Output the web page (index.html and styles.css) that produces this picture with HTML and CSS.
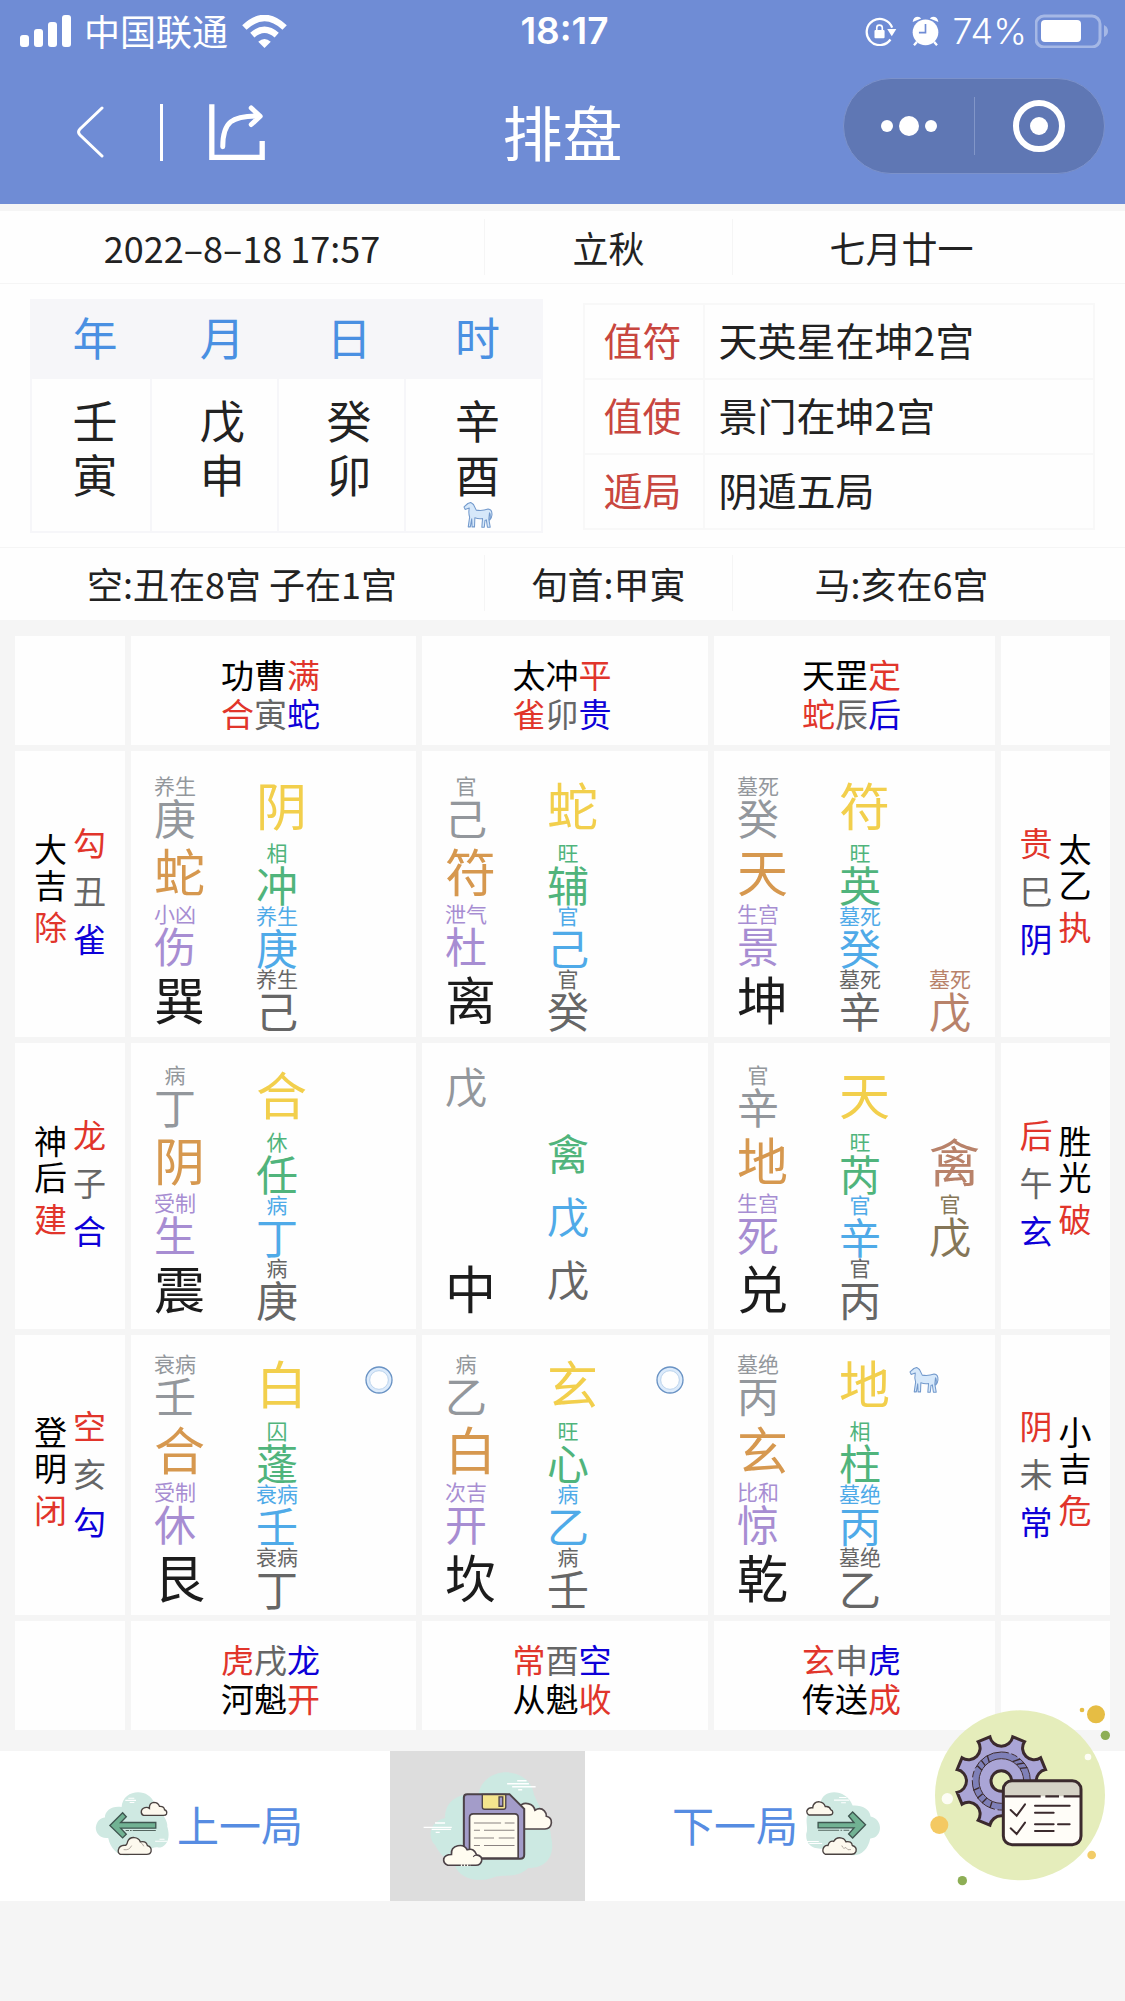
FILE: index.html
```html
<!DOCTYPE html>
<html lang="zh-CN">
<head>
<meta charset="utf-8">
<meta name="viewport" content="width=device-width, initial-scale=1">
<title>排盘</title>
<link rel="stylesheet" href="styles.css">
</head>
<body>
<svg class="defs" aria-hidden="true">
  <symbol id="horse" viewBox="630 984 86 80">
    <path d="M652 988L660 994L668 1010Q685 1013 702 1007Q714 1008 713 1024Q712 1034 707 1038Q710 1024 706 1018L704 1036L708 1059L700 1059L697 1038L693 1040L691 1059L684 1059L686 1034Q675 1036 664 1032L663 1058L656 1058L655 1035L651 1058L645 1058L649 1030Q645 1018 648 1004L636 1008L633 1001L644 991Z" fill="#d6e8fa" stroke="#7299cc" stroke-width="3" stroke-linejoin="round"/>
  </symbol>
  <symbol id="ring" viewBox="0 0 84 84">
    <circle cx="42" cy="42" r="34" fill="none" stroke="#dcebfb" stroke-width="11"/>
    <circle cx="42" cy="42" r="39" fill="none" stroke="#6a93c4" stroke-width="4"/>
    <circle cx="42" cy="42" r="28" fill="none" stroke="#9dbfe4" stroke-width="2"/>
  </symbol>
</svg>

<header class="header">
  <div class="status">
    <div class="status__side">
      <svg class="signal" viewBox="0 0 52 32" width="52" height="32" fill="#fff" aria-hidden="true"><rect y="20" width="9" height="12" rx="3"/><rect x="14" y="14" width="9" height="18" rx="3"/><rect x="28" y="7" width="9" height="25" rx="3"/><rect x="42" width="9" height="32" rx="3"/></svg>
      <span class="status__carrier">中国联通</span>
      <svg viewBox="730 38 136 100" width="45" height="33" aria-hidden="true"><g fill="none" stroke="#fff" stroke-width="19"><path d="M737 76Q798 18 859 76"/><path d="M761 99Q798 66 835 99"/></g><path d="M779 119Q798 103 817 119L798 138Z" fill="#fff"/></svg>
    </div>
    <time class="status__time">18:17</time>
    <div class="status__side status__side--end">
      <svg viewBox="136 48 98 92" width="32" height="30" aria-hidden="true"><path d="M214 120A40 40 0 1 1 219 84" fill="none" stroke="#fff" stroke-width="7"/><path d="M204 88H232L218 110Z" fill="#fff"/><rect x="165" y="91" width="31" height="25" rx="3" fill="#fff"/><path d="M172 92V84Q172 76 180 76Q189 76 189 84V92" fill="none" stroke="#fff" stroke-width="5"/></svg>
      <svg class="alarm" viewBox="280 46 82 90" width="27" height="30" aria-hidden="true"><circle cx="321" cy="95" r="39" fill="#fff"/><path d="M282 64Q284 48 298 48Q304 48 308 53ZM360 64Q358 48 344 48Q338 48 334 53Z" fill="#fff"/><path d="M295 124L286 134M347 124L356 134" stroke="#fff" stroke-width="7"/><path d="M321 70V96H301" fill="none" stroke="#6f8cd5" stroke-width="5"/></svg>
      <span class="status__percent">74%</span>
      <svg viewBox="0 0 74 34" width="74" height="34" aria-hidden="true"><rect x="1" y="2" width="64" height="31" rx="8" fill="none" stroke="#a5b8e6" stroke-width="3"/><rect x="6" y="6" width="40" height="22" rx="4" fill="#fff"/><path d="M69 11Q73 13 73 17Q73 21 69 23Z" fill="#a5b8e6"/></svg>
    </div>
  </div>
  <nav class="nav">
    <div class="nav__left">
      <button class="icon-button" aria-label="返回"><svg viewBox="0 0 28 52" width="28" height="52"><path d="M26 2L4 23Q1 26 4 29L26 50" fill="none" stroke="#fff" stroke-width="3" stroke-linecap="round"/></svg></button>
      <span class="nav__line"></span>
      <button class="icon-button" aria-label="分享"><svg viewBox="627 317 168 169" width="56" height="56" fill="none" stroke="#fff" stroke-width="16"><path d="M635 318V478H787V429"/><path d="M668 446C668 370 695 353 778 353M754 329L781 354L754 379" stroke-linecap="round" stroke-linejoin="round" stroke-width="15"/></svg></button>
    </div>
    <h1 class="nav__title">排盘</h1>
    <div class="capsule">
      <button class="capsule__button" aria-label="更多"><svg viewBox="0 0 58 20" width="58" height="20" fill="#fff"><circle cx="7" cy="10" r="6"/><circle cx="29" cy="10" r="10"/><circle cx="51" cy="10" r="6"/></svg></button>
      <span class="capsule__line"></span>
      <button class="capsule__button" aria-label="关闭"><svg viewBox="0 0 52 52" width="52" height="52"><circle cx="26" cy="26" r="23" fill="none" stroke="#fff" stroke-width="6"/><circle cx="26" cy="26" r="9" fill="#fff"/></svg></button>
    </div>
  </nav>
</header>

<main>
  <section class="info">
    <div class="facts">
      <span>2022–8–18 17:57</span><span>立秋</span><span>七月廿一</span>
    </div>
    <div class="charts">
      <table class="pillars">
        <thead><tr><th scope="col">年</th><th scope="col">月</th><th scope="col">日</th><th scope="col">时</th></tr></thead>
        <tbody><tr><td>壬<br>寅</td><td>戊<br>申</td><td>癸<br>卯</td><td>辛<br>酉<svg class="pillars__horse" width="30" height="28"><use href="#horse"/></svg></td></tr></tbody>
      </table>
      <table class="duty">
        <tr><th scope="row">值符</th><td>天英星在坤2宫</td></tr>
        <tr><th scope="row">值使</th><td>景门在坤2宫</td></tr>
        <tr><th scope="row">遁局</th><td>阴遁五局</td></tr>
      </table>
    </div>
    <div class="facts facts--bottom">
      <span>空:丑在8宫 子在1宫</span><span>旬首:甲寅</span><span>马:亥在6宫</span>
    </div>
  </section>

  <section class="board">
    <div class="edge"></div>
    <div class="edge"><p>功曹<i class="red">满</i></p><p><i class="red">合</i><i class="gray">寅</i><i class="blue">蛇</i></p></div>
    <div class="edge"><p>太冲<i class="red">平</i></p><p><i class="red">雀</i><i class="gray">卯</i><i class="blue">贵</i></p></div>
    <div class="edge"><p>天罡<i class="red">定</i></p><p><i class="red">蛇</i><i class="gray">辰</i><i class="blue">后</i></p></div>
    <div class="edge"></div>

    <div class="side">
      <div class="side__name"><i>大</i><i>吉</i><i class="red">除</i></div>
      <div class="side__gods"><i class="red">勾</i><i class="gray">丑</i><i class="blue">雀</i></div>
    </div>
    <div class="palace palace--upper">
      <div class="palace__col">
        <div class="pair hidden-stem"><small>养生</small><b>庚</b></div>
        <div class="large earth-god">蛇</div>
        <div class="pair door"><small>小凶</small><b>伤</b></div>
        <div class="large trigram">巽</div>
      </div>
      <div class="palace__col">
        <div class="head">阴</div>
        <div class="pair star"><small>相</small><b>冲</b></div>
        <div class="pair sky"><small>养生</small><b>庚</b></div>
        <div class="pair ground"><small>养生</small><b>己</b></div>
      </div>
    </div>
    <div class="palace palace--upper">
      <div class="palace__col">
        <div class="pair hidden-stem"><small>官</small><b>己</b></div>
        <div class="large earth-god">符</div>
        <div class="pair door"><small>泄气</small><b>杜</b></div>
        <div class="large trigram">离</div>
      </div>
      <div class="palace__col">
        <div class="head">蛇</div>
        <div class="pair star"><small>旺</small><b>辅</b></div>
        <div class="pair sky"><small>官</small><b>己</b></div>
        <div class="pair ground"><small>官</small><b>癸</b></div>
      </div>
    </div>
    <div class="palace palace--upper">
      <div class="palace__col">
        <div class="pair hidden-stem"><small>墓死</small><b>癸</b></div>
        <div class="large earth-god">天</div>
        <div class="pair door"><small>生宫</small><b>景</b></div>
        <div class="large trigram">坤</div>
      </div>
      <div class="palace__col">
        <div class="head">符</div>
        <div class="pair star"><small>旺</small><b>英</b></div>
        <div class="pair sky"><small>墓死</small><b>癸</b></div>
        <div class="pair ground"><small>墓死</small><b>辛</b></div>
      </div>
      <div class="palace__col palace__col--end">
        <div class="pair guest"><small>墓死</small><b>戊</b></div>
      </div>
    </div>
    <div class="side">
      <div class="side__gods"><i class="red">贵</i><i class="gray">巳</i><i class="blue">阴</i></div>
      <div class="side__name"><i>太</i><i>乙</i><i class="red">执</i></div>
    </div>

    <div class="side">
      <div class="side__name"><i>神</i><i>后</i><i class="red">建</i></div>
      <div class="side__gods"><i class="red">龙</i><i class="gray">子</i><i class="blue">合</i></div>
    </div>
    <div class="palace palace--middle">
      <div class="palace__col">
        <div class="pair hidden-stem"><small>病</small><b>丁</b></div>
        <div class="large earth-god">阴</div>
        <div class="pair door"><small>受制</small><b>生</b></div>
        <div class="large trigram">震</div>
      </div>
      <div class="palace__col">
        <div class="head">合</div>
        <div class="pair star"><small>休</small><b>任</b></div>
        <div class="pair sky"><small>病</small><b>丁</b></div>
        <div class="pair ground"><small>病</small><b>庚</b></div>
      </div>
    </div>
    <div class="palace palace--middle">
      <div class="palace__col palace__col--apart">
        <div class="pair hidden-stem"><b>戊</b></div>
        <div class="large trigram">中</div>
      </div>
      <div class="palace__col palace__col--end">
        <div class="pair star"><b>禽</b></div>
        <div class="pair sky"><b>戊</b></div>
        <div class="pair ground"><b>戊</b></div>
      </div>
    </div>
    <div class="palace palace--middle">
      <div class="palace__col">
        <div class="pair hidden-stem"><small>官</small><b>辛</b></div>
        <div class="large earth-god">地</div>
        <div class="pair door"><small>生宫</small><b>死</b></div>
        <div class="large trigram">兑</div>
      </div>
      <div class="palace__col">
        <div class="head">天</div>
        <div class="pair star"><small>旺</small><b>芮</b></div>
        <div class="pair sky"><small>官</small><b>辛</b></div>
        <div class="pair ground"><small>官</small><b>丙</b></div>
      </div>
      <div class="palace__col palace__col--center">
        <div class="large guest">禽</div>
        <div class="pair guest-stem"><small>官</small><b>戊</b></div>
      </div>
    </div>
    <div class="side">
      <div class="side__gods"><i class="red">后</i><i class="gray">午</i><i class="blue">玄</i></div>
      <div class="side__name"><i>胜</i><i>光</i><i class="red">破</i></div>
    </div>

    <div class="side side--lower">
      <div class="side__name"><i>登</i><i>明</i><i class="red">闭</i></div>
      <div class="side__gods"><i class="red">空</i><i class="gray">亥</i><i class="blue">勾</i></div>
    </div>
    <div class="palace palace--lower">
      <div class="palace__col">
        <div class="pair hidden-stem"><small>衰病</small><b>壬</b></div>
        <div class="large earth-god">合</div>
        <div class="pair door"><small>受制</small><b>休</b></div>
        <div class="large trigram">艮</div>
      </div>
      <div class="palace__col">
        <div class="head">白<svg class="ring" width="28" height="28"><use href="#ring"/></svg></div>
        <div class="pair star"><small>囚</small><b>蓬</b></div>
        <div class="pair sky"><small>衰病</small><b>壬</b></div>
        <div class="pair ground"><small>衰病</small><b>丁</b></div>
      </div>
    </div>
    <div class="palace palace--lower">
      <div class="palace__col">
        <div class="pair hidden-stem"><small>病</small><b>乙</b></div>
        <div class="large earth-god">白</div>
        <div class="pair door"><small>次吉</small><b>开</b></div>
        <div class="large trigram">坎</div>
      </div>
      <div class="palace__col">
        <div class="head">玄<svg class="ring" width="28" height="28"><use href="#ring"/></svg></div>
        <div class="pair star"><small>旺</small><b>心</b></div>
        <div class="pair sky"><small>病</small><b>乙</b></div>
        <div class="pair ground"><small>病</small><b>壬</b></div>
      </div>
    </div>
    <div class="palace palace--lower">
      <div class="palace__col">
        <div class="pair hidden-stem"><small>墓绝</small><b>丙</b></div>
        <div class="large earth-god">玄</div>
        <div class="pair door"><small>比和</small><b>惊</b></div>
        <div class="large trigram">乾</div>
      </div>
      <div class="palace__col">
        <div class="head">地<svg class="horse" width="30" height="28"><use href="#horse"/></svg></div>
        <div class="pair star"><small>相</small><b>柱</b></div>
        <div class="pair sky"><small>墓绝</small><b>丙</b></div>
        <div class="pair ground"><small>墓绝</small><b>乙</b></div>
      </div>
    </div>
    <div class="side side--lower">
      <div class="side__gods"><i class="red">阴</i><i class="gray">未</i><i class="blue">常</i></div>
      <div class="side__name"><i>小</i><i>吉</i><i class="red">危</i></div>
    </div>

    <div class="edge"></div>
    <div class="edge"><p><i class="red">虎</i><i class="gray">戌</i><i class="blue">龙</i></p><p>河魁<i class="red">开</i></p></div>
    <div class="edge"><p><i class="red">常</i><i class="gray">酉</i><i class="blue">空</i></p><p>从魁<i class="red">收</i></p></div>
    <div class="edge"><p><i class="red">玄</i><i class="gray">申</i><i class="blue">虎</i></p><p>传送<i class="red">成</i></p></div>
    <div class="edge"></div>
  </section>
</main>

<footer class="actions">
  <button class="action action--previous">
    <svg viewBox="44 160 218 194" width="74" height="65" aria-hidden="true">
      <path d="M122 205C125 150 205 145 220 195C235 215 262 245 258 262C270 300 255 325 232 326C210 320 190 350 158 345C120 360 90 335 82 297C55 300 44 280 45 265C48 245 60 237 72 236C72 215 95 200 122 205Z" fill="#cfe9e2"/>
      <path d="M133 185H165M142 179H160M146 191H160M222 307H258M235 301H250" stroke="#fff" stroke-width="3"/>
      <path d="M87 260L125 222L136 234L119 251H224V268H119L136 286L125 297Z" fill="#71b293" stroke="#3f5650" stroke-width="4"/>
      <path d="M134 275H224" stroke="#54655f" stroke-width="3" stroke-dasharray="10 3 5 3 80"/>
      <path d="M187 230Q179 226 181 216Q185 206 197 206Q201 206 205 209Q204 193 218 191Q231 191 235 203Q249 202 250 213Q259 216 256 226Q254 230 246 230Z" fill="#fdf9ee" stroke="#4a4240" stroke-width="4"/>
      <path d="M118 346Q109 341 113 330Q116 320 130 319Q137 321 140 308Q145 295 160 296Q174 297 178 309Q195 305 199 320Q212 323 210 337Q208 346 197 346Z" fill="#fdf9ee" stroke="#4a4240" stroke-width="4"/>
      <path d="M128 332Q145 335 152 320M178 310Q186 315 188 322" fill="none" stroke="#8c817a" stroke-width="2"/>
    </svg>
    上一局
  </button>
  <button class="action action--save" aria-label="保存">
    <svg viewBox="1005 95 386 328" width="130" height="110" aria-hidden="true">
      <path d="M1170 162C1185 80 1320 75 1335 165C1350 205 1385 250 1386 290C1400 350 1370 385 1318 384C1280 420 1240 398 1210 414C1160 430 1110 410 1100 378C1060 350 1050 335 1040 316C1015 290 1025 245 1070 235C1070 190 1100 160 1170 162Z" fill="#cce9e2"/>
      <path d="M1255 133H1320M1285 124H1313M1270 142H1340M1288 151H1300M1006 263H1090M1040 250H1070M1030 269H1088M1042 278H1054" stroke="#fff" stroke-width="4"/>
      <path d="M1290 205Q1300 187 1320 193Q1335 197 1338 212Q1354 202 1366 214Q1372 220 1372 230Q1388 233 1387 250Q1385 267 1368 268H1290Z" fill="#fffcf0" stroke="#52474a" stroke-width="5"/>
      <path d="M1136 164H1262L1306 208V345Q1306 357 1294 357H1138Q1126 357 1126 345V174Q1126 164 1136 164Z" fill="#a39cc9" stroke="#4c4247" stroke-width="6"/>
      <path d="M1181 165H1251V202Q1251 209 1244 209H1188Q1181 209 1181 202Z" fill="#f4e58e" stroke="#4c4247" stroke-width="4"/>
      <path d="M1231 172H1242V200H1231Z" fill="#a39cc9" stroke="#4c4247" stroke-width="4"/>
      <path d="M1143 355V234Q1143 223 1154 223H1278Q1288 223 1288 234V355Z" fill="#fffcf0" stroke="#4c4247" stroke-width="5"/>
      <path d="M1156 250H1237M1248 250H1277M1156 272H1174M1186 272H1277M1156 295H1216M1230 295H1277M1156 317H1174M1186 317H1277" stroke="#8a8280" stroke-width="3"/>
      <path d="M1078 376Q1064 371 1066 357Q1070 344 1089 344Q1087 322 1108 318Q1128 314 1136 330Q1157 323 1164 345Q1182 348 1179 363Q1176 376 1162 376Z" fill="#fffcf0" stroke="#4c4247" stroke-width="5"/>
      <path d="M1154 351Q1158 345 1164 346" fill="none" stroke="#4c4247" stroke-width="3"/>
      <path d="M1117 376H1145" stroke="#fffcf0" stroke-width="6" stroke-dasharray="4 5"/>
    </svg>
  </button>
  <button class="action action--next">
    下一局
    <svg viewBox="503 312 217 192" width="74" height="65" aria-hidden="true">
      <path d="M545 345C550 302 620 300 640 352C665 350 690 360 693 384C735 395 725 450 692 449C685 485 660 505 628 497C600 500 575 490 560 478C520 485 500 465 503 435C510 420 498 395 508 375C515 355 530 345 545 345Z" fill="#cfe9e2"/>
      <path d="M585 336H630M600 328H622M606 344H620M505 458H540M512 464H550" stroke="#fff" stroke-width="3"/>
      <path d="M678 409L640 371L628 383L644 402H538V418H644L628 436L640 448Z" fill="#71b293" stroke="#3f5650" stroke-width="4"/>
      <path d="M538 425H630" stroke="#54655f" stroke-width="3" stroke-dasharray="62 4 5 4 20"/>
      <path d="M511 380Q503 375 505 367Q510 357 522 359Q524 340 542 341Q555 342 559 355Q572 353 575 364Q584 368 580 377Q577 380 570 380Z" fill="#fdf9ee" stroke="#4a4240" stroke-width="4"/>
      <path d="M559 496Q549 490 553 479Q557 468 567 470Q572 454 584 458Q592 444 608 448Q617 450 620 459Q637 456 639 470Q653 474 650 487Q647 496 637 496Z" fill="#fdf9ee" stroke="#4a4240" stroke-width="4"/>
      <path d="M608 470Q612 482 620 476Q625 486 635 482" fill="none" stroke="#8c817a" stroke-width="2"/>
    </svg>
  </button>
  <button class="settings" aria-label="设置">
    <svg viewBox="870 50 540 543" width="180" height="181">
      <circle cx="1140" cy="321" r="255" fill="#e5edbb"/>
      <circle cx="1368" cy="78" r="27" fill="#e6bd44"/><circle cx="1326" cy="65" r="7" fill="#e6bd44"/><circle cx="1396" cy="141" r="14" fill="#8dae55"/>
      <circle cx="1344" cy="206" r="10" fill="#fdfdf5"/><circle cx="922" cy="331" r="17" fill="#fdfdf5"/>
      <circle cx="898" cy="410" r="27" fill="#f4c962"/><circle cx="1355" cy="500" r="13" fill="#f2cc68"/><circle cx="967" cy="577" r="14" fill="#8dae55"/>
      <g transform="translate(1084 278)">
        <path d="M-34.300-132.600A35 35 0 0 0 34.300-132.600L69.500-118A35 35 0 0 0 118-69.500L132.600-34.300A35 35 0 0 0 132.600 34.300L118 69.500A35 35 0 0 0 69.500 118L34.300 132.600A35 35 0 0 0-34.300 132.600L-69.500 118A35 35 0 0 0-118 69.500L-132.600 34.300A35 35 0 0 0-132.600-34.300L-118-69.500A35 35 0 0 0-69.500-118Z" fill="#aaa5d6" stroke="#3b2a2d" stroke-width="9"/>
        <circle r="77" fill="none" stroke="#7f80b8" stroke-width="18"/>
        <circle r="87" fill="none" stroke="#3b2a2d" stroke-width="3" stroke-dasharray="120 8 20 8"/>
        <circle r="67" fill="none" stroke="#3b2a2d" stroke-width="3"/>
        <path d="M-36-56L-42-76M-48-46L-60-62M-58-32L-72-46M-66 20L-84 28M-56 38L-72 52M-44 52L-58 66M-28 62L-34 80M34-58L56-66M46-50L68-54M56-38L78-40" stroke="#3b2a2d" stroke-width="4"/>
        <circle r="31" fill="#e5edbb" stroke="#3b2a2d" stroke-width="9"/>
      </g>
      <rect x="1090" y="277" width="233" height="192" rx="24" fill="#fffdf8"/>
      <path d="M1090 324V301Q1090 277 1114 277H1299Q1323 277 1323 301V324Z" fill="#d5d2c5"/>
      <path d="M1094 324H1202M1216 324H1257M1271 324H1320" stroke="#3b2a2d" stroke-width="7"/>
      <rect x="1090" y="277" width="233" height="192" rx="26" fill="none" stroke="#3b2a2d" stroke-width="9"/>
      <path d="M1112 365L1130 382L1155 348M1112 420L1130 437L1155 403M1185 352H1289M1185 373H1241M1185 408H1241M1254 408H1289M1185 428H1241" fill="none" stroke="#3b2a2d" stroke-width="6" stroke-linecap="round"/>
    </svg>
  </button>
</footer>
</body>
</html>
```
FILE: styles.css
```css
* {
  box-sizing: border-box;
}

body {
  margin: 0;
  background: #f5f5f5;
  color: #222;
  font-family: "Noto Sans CJK SC", sans-serif;
}

button {
  padding: 0;
  border: 0;
  background: none;
  color: inherit;
  font: inherit;
}

svg {
  display: block;
  flex: none;
}

i,
b {
  font-style: normal;
  font-weight: 400;
}

.defs {
  position: absolute;
  width: 0;
  height: 0;
}

/* Header */
.header {
  background: #6f8cd5;
  color: #fff;
}

.status,
.nav {
  display: grid;
  grid-template-columns: 1fr auto 1fr;
  align-items: center;
}

.status {
  height: 62px;
  padding: 0 16px 0 20px;
  font-size: 36px;
  line-height: 40px;
}

.status__side {
  display: flex;
  align-items: center;
}

.status__side--end {
  justify-content: flex-end;
}

.status__carrier {
  margin: 0 14px 2px 12px;
}

.status__time,
.status__percent {
  font-family: Inter, sans-serif;
}

.status__time {
  font-size: 37px;
  font-weight: 600;
}

.status__percent {
  margin: 0 8px 0 14px;
  font-size: 36px;
  font-weight: 300;
}

.alarm {
  margin-left: 15px;
}

.nav {
  height: 142px;
  padding: 0 20px 2px 76px;
}

.nav__left {
  display: flex;
  align-items: center;
}

.nav__line {
  width: 3px;
  height: 57px;
  margin: 0 46px 0 56px;
  background: #fff;
}

.nav__title {
  margin: 0 56px 3px 0;
  font-size: 60px;
  font-weight: 400;
  line-height: 72px;
}

.capsule {
  display: flex;
  align-items: center;
  justify-self: end;
  width: 262px;
  height: 96px;
  margin-bottom: 12px;
  border: 1px solid #7c92cb;
  border-radius: 48px;
  background: #5f77b4;
}

.capsule__button {
  display: flex;
  flex: 1;
  align-items: center;
  justify-content: center;
}

.capsule__line {
  width: 1px;
  height: 58px;
  background: #8296c8;
}

/* Date, pillars and duty summary */
.info {
  margin-top: 7px;
  background: #fefefe;
}

.facts {
  display: grid;
  grid-template-columns: 484fr 248fr 338fr;
  align-items: center;
  height: 73px;
  padding-right: 55px;
  border-bottom: 1px solid #f5f5f5;
  font-size: 36px;
  line-height: 56px;
  text-align: center;
}

.facts--bottom {
  padding-bottom: 3px;
  border-top: 1px solid #f5f5f5;
  border-bottom: 0;
}

.facts span + span {
  border-left: 1px solid #f5f5f5;
}

.charts {
  display: grid;
  grid-template-columns: 1fr 1fr;
  gap: 40px;
  align-items: center;
  padding: 15px 30px 14px;
}

.pillars,
.duty {
  width: 100%;
  border-spacing: 0;
  border-collapse: collapse;
  table-layout: fixed;
}

.pillars th,
.pillars td {
  padding: 0 0 0 16px;
  border: 2px solid #f6f6f9;
  font-size: 45px;
  font-weight: 400;
  line-height: 54px;
  text-align: center;
}

.pillars th:first-child,
.pillars td:first-child {
  width: 120px;
  padding-left: 8px;
}

.pillars th:last-child,
.pillars td:last-child {
  width: 137px;
  padding-left: 9px;
}

.pillars th {
  height: 78px;
  padding-bottom: 4px;
  background: #f6f6f9;
  color: #4a90e2;
}

.pillars td {
  height: 154px;
  padding-top: 14px;
  vertical-align: top;
}

.pillars__horse {
  margin: 0 auto;
}

.duty th,
.duty td {
  height: 75px;
  padding: 0 0 4px;
  border: 2px solid #f8f8f8;
  font-size: 39px;
  font-weight: 400;
  line-height: 48px;
}

.duty th {
  width: 120px;
  padding-right: 2px;
  color: #c8463f;
}

.duty td {
  padding-left: 14px;
}

/* Nine-palace board */
.board {
  display: grid;
  grid-template-columns: 110fr 285fr 286fr 281fr 109fr;
  gap: 6px;
  padding: 16px 15px 21px;
}

.edge,
.side,
.palace {
  background: #fefefe;
}

.edge {
  min-height: 109px;
  padding: 19px 6px 12px 0;
  color: #000;
  font-size: 33px;
  line-height: 39px;
  text-align: center;
}

.edge p {
  margin: 0;
}

.side {
  display: flex;
  gap: 6px;
  align-items: center;
  justify-content: center;
  padding-bottom: 9px;
  color: #000;
  font-size: 33px;
  line-height: 48px;
}

.side--lower {
  padding-bottom: 5px;
}

.side i {
  display: block;
}

.side__name i:not(:last-child) {
  line-height: 36px;
}

.red {
  color: #e1352b;
}

.gray {
  color: #666;
}

.blue {
  color: #0d00d8;
}

.palace {
  display: grid;
  grid-template-columns: 102px 90px 1fr;
  padding-left: 23px;
}

.palace--upper {
  padding-top: 24px;
  padding-bottom: 6px;
}

.palace--middle {
  padding-top: 21px;
  padding-bottom: 9px;
}

.palace--lower {
  padding-top: 18px;
  padding-bottom: 6px;
}

.palace__col {
  display: flex;
  flex-direction: column;
}

.palace__col--end {
  justify-content: flex-end;
}

.palace__col--center {
  justify-content: center;
}

.palace__col--apart {
  justify-content: space-between;
}

.pair {
  width: 42px;
  height: 63px;
  text-align: center;
}

.pair small {
  display: block;
  font-size: 21px;
  line-height: 21px;
}

.pair b {
  display: block;
  font-size: 42px;
  line-height: 42px;
}

.large {
  font-size: 51px;
  line-height: 65px;
}

.head {
  display: flex;
  align-items: center;
  margin-bottom: auto;
  color: #f2cf4c;
  font-size: 51px;
  line-height: 58px;
}

.ring {
  margin: 0 0 4px 58px;
}

.horse {
  margin: 0 0 4px 19px;
}

.hidden-stem {
  color: #93979c;
}

.earth-god {
  color: #d6984f;
}

.door {
  color: #a78dd2;
}

.trigram {
  color: #1c1c1c;
}

.star {
  color: #50b47c;
}

.sky {
  color: #4faae8;
}

.ground {
  color: #666;
}

.guest {
  color: #b8826a;
}

.guest-stem {
  color: #857657;
}

/* Bottom actions */
.actions {
  position: relative;
  display: grid;
  grid-template-columns: 390fr 195fr 390fr 150fr;
  height: 150px;
  background: #fff;
  color: #568ce2;
  font-size: 42px;
  line-height: 60px;
}

.action {
  display: flex;
  gap: 8px;
  align-items: center;
  justify-content: center;
  padding-bottom: 4px;
}

.action--previous {
  padding-left: 8px;
}

.action--next {
  padding-right: 8px;
}

.action--save {
  padding-bottom: 0;
  background: #ddd;
}

.settings {
  position: absolute;
  top: -46px;
  right: 15px;
}
```
